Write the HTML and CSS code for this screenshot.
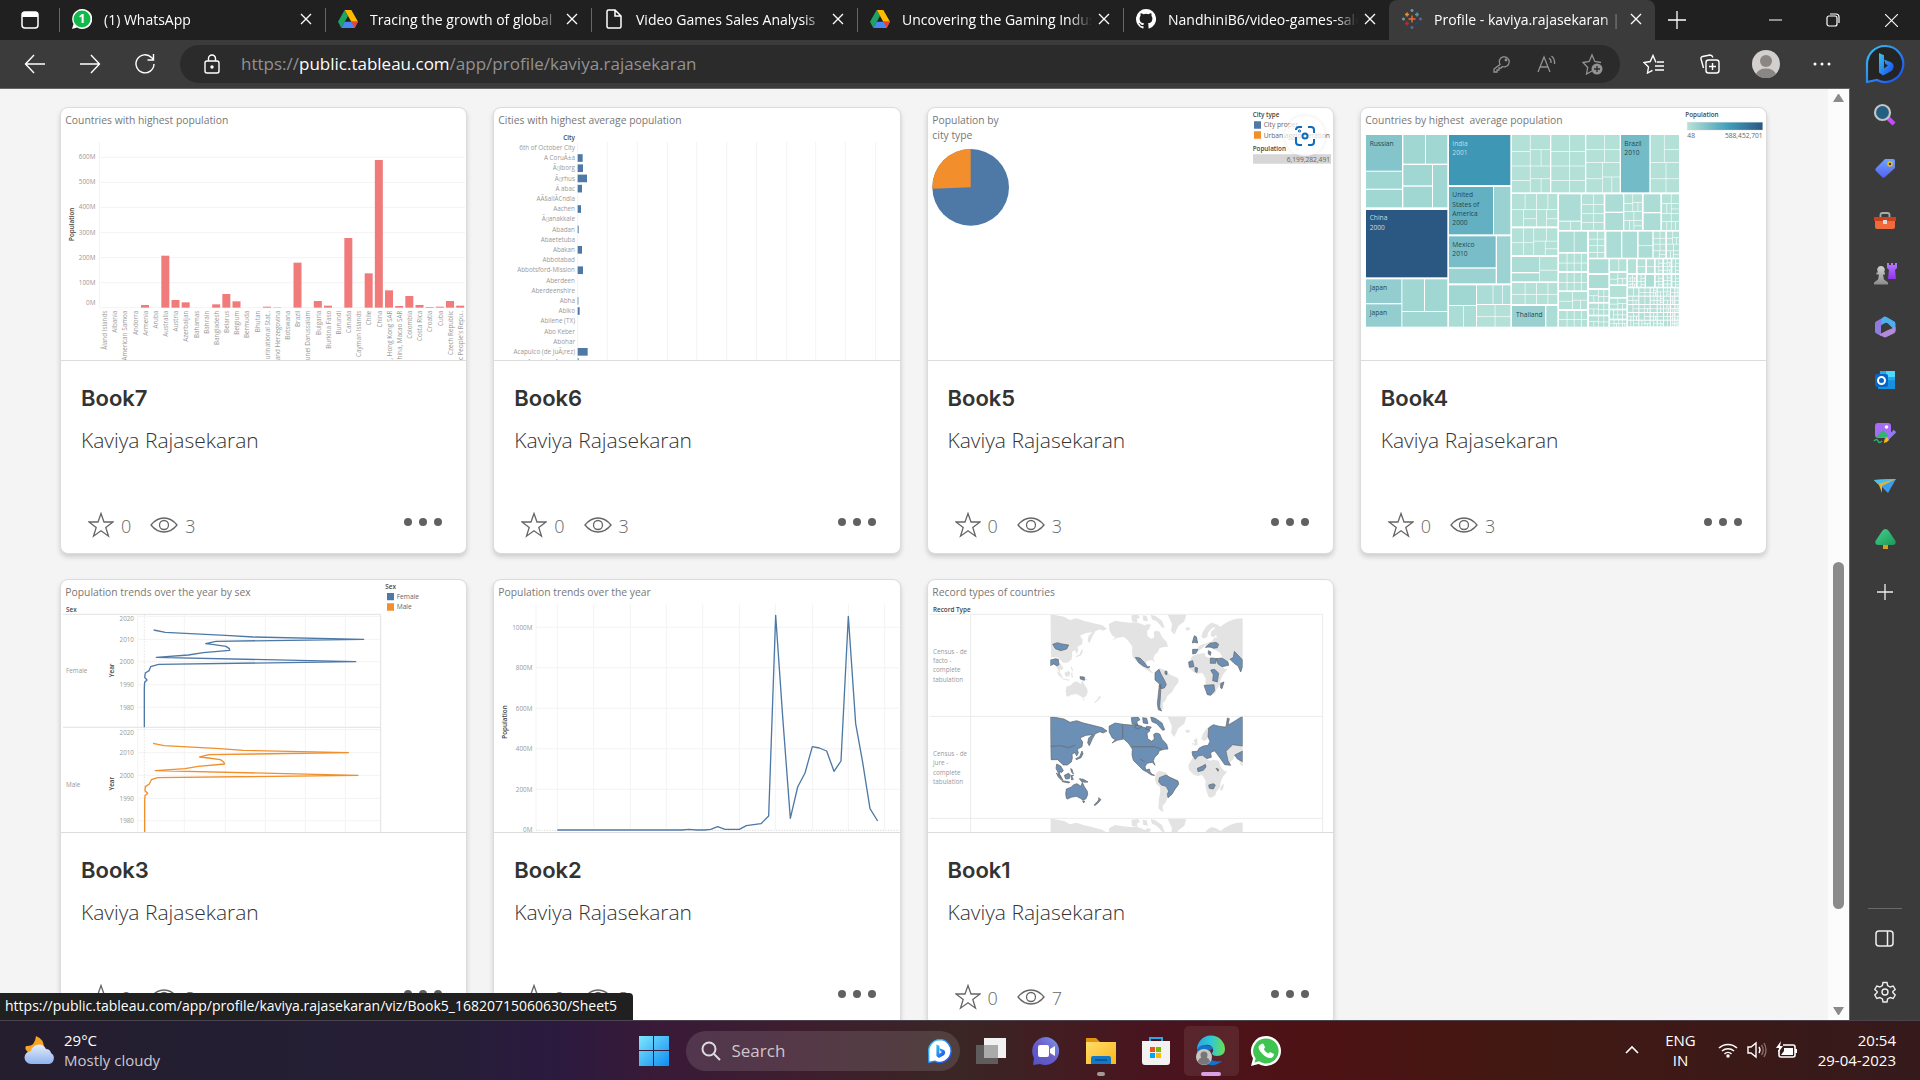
FILE: index.html
```html
<!DOCTYPE html>
<html lang="en">
<head>
<meta charset="utf-8">
<title>Profile - kaviya.rajasekaran | Tableau Public</title>
<link rel="stylesheet" href="styles.css">
</head>
<body>
<svg class="defs" aria-hidden="true">
  <defs>
    <linearGradient id="gBlue" x1="0" y1="0" x2="1" y2="1"><stop offset="0" stop-color="#37c6f0"/><stop offset="1" stop-color="#1b48ef"/></linearGradient>
    <linearGradient id="gPurple" x1="0" y1="0" x2="0" y2="1"><stop offset="0" stop-color="#b57bff"/><stop offset="1" stop-color="#9333f0"/></linearGradient>
    <linearGradient id="gGrey" x1="0" y1="0" x2="0" y2="1"><stop offset="0" stop-color="#d0d0d0"/><stop offset="1" stop-color="#8c8c8c"/></linearGradient>
    <linearGradient id="gTag" x1="0" y1="0" x2="0" y2="1"><stop offset="0" stop-color="#6fa4fb"/><stop offset="1" stop-color="#5660f4"/></linearGradient>
    <linearGradient id="gTree" x1="0" y1="0" x2="1" y2="1"><stop offset="0" stop-color="#49cf91"/><stop offset="1" stop-color="#189a55"/></linearGradient>
    <linearGradient id="gWin" x1="0" y1="0" x2="1" y2="1"><stop offset="0" stop-color="#7fe6ff"/><stop offset="1" stop-color="#0d8df0"/></linearGradient>
    <linearGradient id="gFolder" x1="0" y1="0" x2="1" y2="1"><stop offset="0" stop-color="#ffdc6b"/><stop offset="1" stop-color="#fbb61b"/></linearGradient>
    <linearGradient id="gChat" x1="1" y1="0" x2="0" y2="1"><stop offset="0" stop-color="#7a9cf2"/><stop offset=".5" stop-color="#6a5cc8"/><stop offset="1" stop-color="#5154c8"/></linearGradient>
    <linearGradient id="gEdge" x1="0" y1="0" x2="1" y2="0"><stop offset="0" stop-color="#2aa5e0"/><stop offset=".5" stop-color="#2fc7d8"/><stop offset="1" stop-color="#6ae04f"/></linearGradient>
    <linearGradient id="gCloud" x1="0" y1="0" x2="0" y2="1"><stop offset="0" stop-color="#e4edfb"/><stop offset="1" stop-color="#8fb2ee"/></linearGradient>
    <linearGradient id="gScale" x1="0" y1="0" x2="1" y2="0"><stop offset="0" stop-color="#b7e3d7"/><stop offset=".55" stop-color="#3f9dba"/><stop offset="1" stop-color="#2b5783"/></linearGradient>
    <symbol id="drive" viewBox="0 0 18 16"><path fill="#1ea362" d="M6 0 0 10.500 3 16 9 5.300Z"/><path fill="#ffba00" d="M6 0h6l6 10.500h-6Z"/><path fill="#4688f4" d="M3 16 6 10.500h12L15 16Z"/><path fill="#ea4335" d="M12 10.500h6l-3 5.500Z"/></symbol>
    <symbol id="close" viewBox="0 0 12 12"><path d="M1 1l10 10M11 1 1 11" stroke="currentColor" stroke-width="1.300" fill="none"/></symbol>
    <symbol id="bing" viewBox="0 0 40 40"><path d="M20 2a18 18 0 1 1-8 34L2 38V20A18 18 0 0 1 20 2Z" fill="#242424" stroke="url(#gBlue)" stroke-width="2.200"/><path d="M14 9l5 2.200v13.300l4-3-2.500-1.500-1.500-4.500 6.500 2.500c4 1.700 4 6.500 1 9L18 31.500l-4-3Z" fill="url(#gBlue)"/></symbol>
    <symbol id="star" viewBox="0 0 26 26"><path d="M13 1.500l3 8.500h9l-7.200 5.400 2.700 8.800L13 18.800l-7.500 5.400 2.700-8.800L1 10h9Z" fill="none" stroke="#666" stroke-width="1.300"/></symbol>
    <symbol id="eye" viewBox="0 0 28 16"><path d="M1 8C5 3 9.500 1 14 1s9 2 13 7c-4 5-8.500 7-13 7S5 13 1 8Z" fill="none" stroke="#666" stroke-width="1.300"/><circle cx="14" cy="8" r="4.500" fill="none" stroke="#666" stroke-width="1.300"/></symbol>
    <symbol id="more" viewBox="0 0 40 8"><g fill="#616161"><circle cx="5" cy="4" r="4"/><circle cx="20" cy="4" r="4"/><circle cx="35" cy="4" r="4"/></g></symbol>
    <g id="asia"><path d="M421 134h9l32 6 18 10 20-5 20 7 25 6 32 8 14 10-12 6-9-4-14 6-8 14-10 22-5-8 3-15 12-10-20 2-18 8 8 12-2 14-14 8 3 10-5 10-5-10-9 4 1 12-3 12-12 9h-12l-9-8-8-8h-20Z"/></g>
    <g id="seasia"><path d="M440 275l12 6 8 14-6 6-4-5-1 10 6 10-5-2-6-14-6-12Z"/><path d="M439 302l8 6 12 14-4 2-10-10ZM457 325l22 4-2 3-20-4ZM463 309l12-6 6 4-3 12-11 1ZM483 310l8-2-5 5 4 8-5 2ZM482 289l4 2 4 14-5-5ZM508 319l12 2 14 8-7 1-12-2Z"/><path d="M516 236l3 8-6 12-14 6-2-3 12-6Z"/></g>
    <g id="australia"><path d="M469 350l14-5 8-8 10-3 6 4 6 4 4-12 6 13 9 14 1 10-5 12-9 5-8-6-12-6-16 3-10 5-4-2-2-14ZM518 386h6l-3 6Z"/></g>
    <g id="nz"><path d="M566 376l7 6-8 9-11 9-1-3 10-10 3-5Z"/></g>
    <g id="namerica"><path d="M598 180l-1-18 18-10 24 4 22 2 14-1 20 6 20 6 5 6-9 8 2 16 12 8 8-7-2-14 8-4 10 3 7 16 14 15 4 14-12 1-14 4-4 10-10 10-4 10 5 14-8-9-16 3-6 10 3 10 10-3 2 8 6 8 8 3-10-1-12-8-14-8-14-14-14-14-4-16 1-18-12-18-14-12-20 4-15 8 10-10-9-5Z"/><path d="M664 136l20-2 6 8-10 6 4 10-18-4ZM698 136l12 2 4 16-14-2ZM722 134l14 4 20 14 8 20-6 2-18-20-14-6ZM678 158l18 4-10 8-12-4ZM710 162l14 2-6 8-12-2Z"/></g>
    <g id="greenland"><path d="M773 134h56l-6 20-18 14-12 26-10-12 3-20Z"/><path d="M826 173l12-1 2 7-10 3Z"/></g>
    <g id="samerica"><path d="M738 303l10-8 20 6 10 12 26 11 2 12-12 16-8 14-14 12-6 14-8 8 1 14 4 4-10-2-8-8 2-28 4-22-1-14-10-8-6-16Z"/></g>
    <g id="africa"><path d="M848 257l16-5 20-3 2 10 14 6 8-3 18 3 6 18 12 14h8l-14 18-6 14-2 16-10 12-4 12-12 7-8-2-6-16-4-18 1-14-6-12-6-6-12 3-12-4-14-14-2-14 8-14ZM934 340l8-6-3 16-5 6-4-6Z"/></g>
    <g id="europe"><path d="M848 250l-2-12 16-1 4-8 12-6 10-2 8-4 10-4 6-10 10-1-4-6-8 6-8-4 2-14 8-6 4-8-12 6-10 12-2 12-10 6-8-6 4-14 12-18 14-10 14 4 14 8 10-8 18-10 18-6 30-2v118l-8 22-8-6-6-20-12-8-4 10-12 12-14 4-14-28-10-6-10-4-2-8-10 4-6-6-8-2-6 8-12 8ZM853 202l8-6 2 22-12 2 4-10-4-2ZM846 211l6 2-4 6Z"/></g>
    <g id="world"><use href="#asia"/><use href="#seasia"/><use href="#australia"/><use href="#nz"/><use href="#namerica"/><use href="#greenland"/><use href="#samerica"/><use href="#africa"/><use href="#europe"/></g>
    <clipPath id="mapClip"><path d="M421 133h577v305H421Z"/></clipPath>
  </defs>
</svg>

<header class="tabs">
  <button class="tab-actions" aria-label="Tab actions"><svg width="20" height="20" viewBox="0 0 20 20"><rect x="2" y="2" width="16" height="16" rx="3" fill="none" stroke="#fff" stroke-width="1.500"/><path d="M2 5a3 3 0 0 1 3-3h10a3 3 0 0 1 3 3v2H2Z" fill="#fff"/></svg></button>
  <div class="tab"><svg width="20" height="20" viewBox="0 0 20 20"><path d="M10 0a10 10 0 1 1-5 18.500L0 20l1.500-5A10 10 0 0 1 10 0Z" fill="#fff"/><circle cx="10" cy="10" r="8.500" fill="#12b84a"/><text x="10" y="14" class="badge-text">1</text></svg><span class="tab-title">(1) WhatsApp</span><button class="tab-close" aria-label="Close tab"><svg width="12" height="12"><use href="#close"/></svg></button></div>
  <div class="tab"><svg width="20" height="18"><use href="#drive"/></svg><span class="tab-title">Tracing the growth of global</span><button class="tab-close" aria-label="Close tab"><svg width="12" height="12"><use href="#close"/></svg></button></div>
  <div class="tab"><svg width="20" height="20" viewBox="0 0 20 20"><path d="M3 2.500Q3 1 4.500 1H11l6 6v10.500q0 1.500-1.500 1.500h-11Q3 19 3 17.500ZM11 1v6h6" fill="none" stroke="#fff" stroke-width="1.500"/></svg><span class="tab-title">Video Games Sales Analysis</span><button class="tab-close" aria-label="Close tab"><svg width="12" height="12"><use href="#close"/></svg></button></div>
  <div class="tab"><svg width="20" height="18"><use href="#drive"/></svg><span class="tab-title">Uncovering the Gaming Industry</span><button class="tab-close" aria-label="Close tab"><svg width="12" height="12"><use href="#close"/></svg></button></div>
  <div class="tab"><svg width="20" height="20" viewBox="0 0 16 16"><path fill="#fff" d="M8 0a8 8 0 0 0-2.530 15.590c.4.070.55-.170.55-.380v-1.490c-2.230.480-2.700-.940-2.700-.940-.360-.920-.890-1.170-.890-1.170-.730-.5.050-.490.050-.490.810.060 1.230.830 1.230.830.710 1.220 1.870.870 2.330.660.070-.520.280-.870.500-1.070-1.780-.200-3.640-.890-3.640-3.950 0-.870.310-1.590.820-2.150-.080-.200-.360-1.020.080-2.120 0 0 .670-.210 2.200.820a7.600 7.600 0 0 1 4 0c1.530-1.040 2.200-.820 2.200-.820.440 1.100.160 1.920.080 2.120.510.560.820 1.270.820 2.150 0 3.070-1.870 3.750-3.650 3.950.290.250.540.730.540 1.480v2.200c0 .210.150.460.550.380A8 8 0 0 0 8 0Z"/></svg><span class="tab-title">NandhiniB6/video-games-sales</span><button class="tab-close" aria-label="Close tab"><svg width="12" height="12"><use href="#close"/></svg></button></div>
  <div class="tab active"><svg width="20" height="20" viewBox="0 0 20 20" fill="none" stroke-width="1.500"><path d="M10 6.500v7M6.500 10h7" stroke="#eb6c32"/><path d="M5 3.500v4M3 5.500h4" stroke="#e8912d"/><path d="M15 3.500v4M13 5.500h4" stroke="#5b93a5"/><path d="M5 12.500v4M3 14.500h4" stroke="#c72037"/><path d="M15 12.500v4M13 14.500h4" stroke="#1f447e"/><path d="M10 0v3M8.500 1.500h3M0 10h3M1.500 8.500v3" stroke="#7199a6"/><path d="M17 10h3M18.500 8.500v3M10 17v3M8.500 18.500h3" stroke="#5c6692"/></svg><span class="tab-title">Profile - kaviya.rajasekaran | Tableau</span><button class="tab-close" aria-label="Close tab"><svg width="12" height="12"><use href="#close"/></svg></button></div>
  <button class="new-tab" aria-label="New tab"><svg width="18" height="18" viewBox="0 0 18 18"><path d="M9 0v18M0 9h18" stroke="#fff" stroke-width="1.300"/></svg></button>
  <div class="window-buttons">
    <button aria-label="Minimize"><svg width="13" height="12" viewBox="0 0 13 12"><path d="M0 6h13" stroke="#fff"/></svg></button>
    <button aria-label="Restore"><svg width="14" height="14" viewBox="0 0 14 14" fill="none" stroke="#fff" stroke-width="1.200"><rect x="1" y="3" width="10" height="10" rx="2"/><path d="M4 1h6a3 3 0 0 1 3 3v6"/></svg></button>
    <button aria-label="Close window"><svg width="13" height="13" viewBox="0 0 12 12"><path d="M0 0l12 12M12 0 0 12" stroke="#fff"/></svg></button>
  </div>
</header>

<div class="browser">
  <div class="window">
    <nav class="toolbar">
      <button class="tool" aria-label="Back"><svg width="22" height="20" viewBox="0 0 22 20" fill="none" stroke="#fff" stroke-width="1.400"><path d="M21 10H2M10 1 1.500 10 10 19"/></svg></button>
      <button class="tool" aria-label="Forward"><svg width="22" height="20" viewBox="0 0 22 20" fill="none" stroke="#fff" stroke-width="1.400"><path d="M1 10h19M12 1l8.500 9L12 19"/></svg></button>
      <button class="tool" aria-label="Refresh"><svg width="22" height="22" viewBox="0 0 22 22" fill="none" stroke="#fff" stroke-width="1.400"><path d="M20 11A9 9 0 1 1 17.500 4.600L19.500 6.500M19.500 1v6h-6"/></svg></button>
      <div class="address">
        <button class="lock" aria-label="Site information"><svg width="18" height="20" viewBox="0 0 18 20" fill="none" stroke="#fff" stroke-width="1.400"><rect x="2" y="7" width="14" height="12" rx="2"/><path d="M5.500 7V4.500a3.500 3.500 0 0 1 7 0V7"/><circle cx="9" cy="13" r="1" fill="#fff"/></svg></button>
        <div class="url" role="textbox" contenteditable="true" spellcheck="false" aria-label="Address">https://<b>public.tableau.com</b>/app/profile/kaviya.rajasekaran</div>
        <button class="hint" aria-label="Passwords"><svg width="18" height="18" viewBox="0 0 18 18" fill="none" stroke="#929292" stroke-width="1.300"><path d="M7 9.500A5 5 0 1 1 9.500 11.500L8 13H6v2H4v2H1v-3Z"/><circle cx="13" cy="5" r=".8"/></svg></button>
        <button class="hint" aria-label="Read aloud"><svg width="20" height="18" viewBox="0 0 20 18" fill="none" stroke="#929292" stroke-width="1.300"><path d="M1 17 7 2l6 15M3.500 12h7M12 3a5 5 0 0 1 2 5M14.500 1a9 9 0 0 1 3 8"/></svg></button>
        <button class="hint" aria-label="Add to favorites"><svg width="22" height="22" viewBox="0 0 22 22" fill="none" stroke="#929292" stroke-width="1.300"><path d="M11 18l-5.500 3 1.200-6.500L2 9.500 8.200 8.500 11 2l2.800 6.500L20 9.500"/><circle cx="16" cy="16" r="5.500" fill="#929292" stroke="none"/><path d="M16 13v6M13 16h6" stroke="#2b2b2b"/></svg></button>
      </div>
      <button class="tool wide" aria-label="Favorites"><svg width="22" height="20" viewBox="0 0 22 20" fill="none" stroke="#fff" stroke-width="1.400"><path d="M13 8.500 10 1.500 7.200 7.500 1 8.500l4.500 4.500-1 6 5-2.700M14 8h7M12 12h9M12 16h9"/></svg></button>
      <button class="tool wide" aria-label="Collections"><svg width="20" height="20" viewBox="0 0 20 20" fill="none" stroke="#fff" stroke-width="1.400"><rect x="6" y="6" width="13" height="13" rx="2.500"/><path d="M12.500 9v7M9 12.500h7M3.500 14 1 5a2 2 0 0 1 1.500-2.500L10 1q2 0 3 2.500"/></svg></button>
      <button class="tool wide" aria-label="Profile"><svg width="28" height="28" viewBox="0 0 28 28"><circle cx="14" cy="14" r="14" fill="#d2cfcc"/><circle cx="14" cy="11" r="6" fill="#8a8683"/><path d="M4 24a10.500 8 0 0 1 20 0 14 14 0 0 1-20 0Z" fill="#8a8683"/></svg></button>
      <button class="tool wide" aria-label="Settings and more"><svg width="18" height="4" viewBox="0 0 18 4" fill="#fff"><circle cx="2" cy="2" r="1.500"/><circle cx="9" cy="2" r="1.500"/><circle cx="16" cy="2" r="1.500"/></svg></button>
    </nav>

    <div class="viewport">
      <main class="cards">
        <article class="card">
          <a class="thumb" href="#book7"><svg viewBox="63 39 1218 756" preserveAspectRatio="xMinYMin slice">
            <text class="ct" x="76" y="88">Countries with highest population</text>
            <path class="gl" d="M178 140V638M178 187H1275M178 262H1275M178 337H1275M178 413H1275M178 488H1275M178 563H1275M178 638H1275"/>
            <g class="ax end"><text x="166" y="193">600M</text><text x="166" y="268">500M</text><text x="166" y="343">400M</text><text x="166" y="419">300M</text><text x="166" y="495">200M</text><text x="166" y="569">100M</text><text x="166" y="631">0M</text></g>
            <text class="axt mid" transform="translate(102 388) rotate(-90)">Population</text>
            <g id="countryBars"></g>
          </svg></a>
          <div class="info"><h2>Book7</h2><p>Kaviya Rajasekaran</p><div class="stats"><button aria-label="Favorite"><svg width="26" height="26"><use href="#star"/></svg></button><span>0</span><svg class="views" width="28" height="16"><use href="#eye"/></svg><span>3</span><button class="dots" aria-label="More"><svg width="40" height="8"><use href="#more"/></svg></button></div></div>
        </article>

        <article class="card">
          <a class="thumb" href="#book6"><svg viewBox="42 39 1218 756" preserveAspectRatio="xMinYMin slice">
            <text class="ct" x="55" y="88">Cities with highest average population</text>
            <path class="gl" d="M293 140V795M382 140V795M472 140V795M562 140V795M650 140V795M740 140V795M830 140V795M920 140V795M1007 140V795M1096 140V795M1187 140V795"/>
            <text class="axt end" x="285" y="135">City</text>
            <g id="cityBars"></g>
          </svg></a>
          <div class="info"><h2>Book6</h2><p>Kaviya Rajasekaran</p><div class="stats"><button aria-label="Favorite"><svg width="26" height="26"><use href="#star"/></svg></button><span>0</span><svg class="views" width="28" height="16"><use href="#eye"/></svg><span>3</span><button class="dots" aria-label="More"><svg width="40" height="8"><use href="#more"/></svg></button></div></div>
        </article>

        <article class="card">
          <a class="thumb" href="#book5"><svg viewBox="54 39 1218 756" preserveAspectRatio="xMinYMin slice">
            <text class="ct" x="67" y="88">Population by</text><text class="ct" x="67" y="131">city type</text>
            <circle cx="182" cy="277" r="115" fill="#4e79a7"/><path d="M182 277V162A115 115 0 0 0 67 281Z" fill="#f28e2b"/>
            <text class="axt" x="1028" y="67">City type</text>
            <path fill="#4e79a7" d="M1032 79h21v22h-21Z"/><path fill="#f28e2b" d="M1032 109h21v22h-21Z"/>
            <g class="lg"><text x="1061" y="97">City proper</text><text x="1061" y="128">Urban agglomeration</text></g>
            <text class="axt" x="1028" y="169">Population</text>
            <path fill="#d6d6d6" d="M1029 178h234v28h-234Z"/><text class="lg end" x="1260" y="200">6,199,282,491</text>
          </svg></a>
          <button class="lens" aria-label="Visual search"><svg width="22" height="22" viewBox="0 0 22 22" fill="none" stroke="#0f6cbd" stroke-width="2"><path d="M8 2H5a3 3 0 0 0-3 3M14 2h3a3 3 0 0 1 3 3v3M20 14v3a3 3 0 0 1-3 3h-3M8 20H5a3 3 0 0 1-3-3v-5"/><circle cx="11" cy="11" r="2.500"/><circle cx="5.500" cy="6" r=".5"/></svg></button>
          <div class="info"><h2>Book5</h2><p>Kaviya Rajasekaran</p><div class="stats"><button aria-label="Favorite"><svg width="26" height="26"><use href="#star"/></svg></button><span>0</span><svg class="views" width="28" height="16"><use href="#eye"/></svg><span>3</span><button class="dots" aria-label="More"><svg width="40" height="8"><use href="#more"/></svg></button></div></div>
        </article>

        <article class="card">
          <a class="thumb" href="#book4"><svg viewBox="33 39 1218 756" preserveAspectRatio="xMinYMin slice">
            <text class="ct" x="46" y="88">Countries by highest&#160; average population</text>
            <g id="treemap"></g>
            <g class="tm"><text x="59" y="152">Russian</text><text x="59" y="584">Japan</text><text x="59" y="659">Japan</text><text x="307" y="307">United</text><text x="307" y="335">States of</text><text x="307" y="362">America</text><text x="307" y="389">2000</text><text x="307" y="455">Mexico</text><text x="307" y="483">2010</text><text x="823" y="152">Brazil</text><text x="823" y="180">2010</text><text x="498" y="666">Thailand</text></g>
            <g class="tm light"><text x="307" y="152">India</text><text x="307" y="180">2001</text><text x="59" y="376">China</text><text x="59" y="404">2000</text></g>
            <text class="axt" x="1006" y="67">Population</text>
            <path d="M1012 82h226v23h-226Z" fill="url(#gScale)" stroke="#ccc"/>
            <text class="lg" x="1012" y="129">48</text><text class="lg end" x="1238" y="129">588,452,701</text>
          </svg></a>
          <div class="info"><h2>Book4</h2><p>Kaviya Rajasekaran</p><div class="stats"><button aria-label="Favorite"><svg width="26" height="26"><use href="#star"/></svg></button><span>0</span><svg class="views" width="28" height="16"><use href="#eye"/></svg><span>3</span><button class="dots" aria-label="More"><svg width="40" height="8"><use href="#more"/></svg></button></div></div>
        </article>

        <article class="card">
          <a class="thumb" href="#book3"><svg viewBox="63 30 1218 756" preserveAspectRatio="xMinYMin slice">
            <text class="ct" x="76" y="79">Population trends over the year by sex</text>
            <text class="axt" x="78" y="126">Sex</text>
            <path class="gl" d="M293 133V786M433 133V786M556 133V786M676 133V786M796 133V786M916 133V786M293 139H1022M293 208H1022M293 275H1022M293 344H1022M293 412H1022M293 479H1022M293 548H1022M293 616H1022M293 685H1022M293 752H1022"/>
            <path d="M69 133H1022V786M69 472H1022" fill="none" stroke="#e2e2e2" stroke-width="3"/>
            <path d="M313 133V786" stroke="#ddd" stroke-width="2" stroke-dasharray="5 4"/>
            <g class="ax end"><text x="282" y="154">2020</text><text x="282" y="215">2010</text><text x="282" y="282">2000</text><text x="282" y="351">1990</text><text x="282" y="419">1980</text><text x="282" y="494">2020</text><text x="282" y="555">2010</text><text x="282" y="623">2000</text><text x="282" y="692">1990</text><text x="282" y="759">1980</text></g>
            <g class="ax"><text x="78" y="310">Female</text><text x="78" y="650">Male</text></g>
            <text class="axt mid" transform="translate(223 301) rotate(-90)">Year</text><text class="axt mid" transform="translate(223 641) rotate(-90)">Year</text>
            <path class="ln" d="M341 180L376 187 556 196 640 201 971 208 528 214 497 221 522 224 558 229 568 236 569 241 490 248 445 255 349 262 947 275 356 283 332 290 327 302 316 309 314 322 321 330 314 337 313 355V472"/>
            <path class="ln or" d="M339 520L372 527 540 536 610 541 925 548 507 554 479 561 505 564 541 569 551 576 554 582 475 589 435 596 346 602 954 616 353 623 334 629 328 642 316 650 315 662 323 670 315 677 314 696V786"/>
            <text class="axt" x="1036" y="57">Sex</text><path fill="#4e79a7" d="M1041 69h21v22h-21Z"/><path fill="#f28e2b" d="M1041 100h21v22h-21Z"/>
            <g class="lg"><text x="1070" y="88">Female</text><text x="1070" y="118">Male</text></g>
          </svg></a>
          <div class="info"><h2>Book3</h2><p>Kaviya Rajasekaran</p><div class="stats"><button aria-label="Favorite"><svg width="26" height="26"><use href="#star"/></svg></button><span>0</span><svg class="views" width="28" height="16"><use href="#eye"/></svg><span>3</span><button class="dots" aria-label="More"><svg width="40" height="8"><use href="#more"/></svg></button></div></div>
        </article>

        <article class="card">
          <a class="thumb" href="#book2"><svg viewBox="42 30 1218 756" preserveAspectRatio="xMinYMin slice">
            <text class="ct" x="55" y="79">Population trends over the year</text>
            <path class="gl" d="M168 102V780M232 102V780M341 102V780M451 102V780M559 102V780M668 102V780M778 102V780M886 102V780M998 102V780M1105 102V780M1214 102V780M168 172H1257M168 293H1257M168 415H1257M168 536H1257M168 658H1257"/>
            <path d="M168 781H1257" stroke="#ccc" stroke-width="2" stroke-dasharray="4 4"/>
            <g class="ax end"><text x="157" y="179">1000M</text><text x="157" y="300">800M</text><text x="157" y="422">600M</text><text x="157" y="543">400M</text><text x="157" y="665">200M</text><text x="157" y="787">0M</text></g>
            <text class="axt mid" transform="translate(81 456) rotate(-90)">Population</text>
            <path class="ln" d="M232 780H605L627 778 650 780H672L692 778 713 770 735 778H778L799 767 843 761 866 738 887 136 908 440 931 745 953 651 975 609 997 530 1018 534 1040 543 1062 604 1083 573 1105 139 1127 461 1148 577 1170 716 1193 753"/>
          </svg></a>
          <div class="info"><h2>Book2</h2><p>Kaviya Rajasekaran</p><div class="stats"><button aria-label="Favorite"><svg width="26" height="26"><use href="#star"/></svg></button><span>0</span><svg class="views" width="28" height="16"><use href="#eye"/></svg><span>3</span><button class="dots" aria-label="More"><svg width="40" height="8"><use href="#more"/></svg></button></div></div>
        </article>

        <article class="card">
          <a class="thumb" href="#book1"><svg viewBox="54 30 1218 756" preserveAspectRatio="xMinYMin slice">
            <text class="ct" x="67" y="79">Record types of countries</text>
            <text class="axt" x="69" y="126">Record Type</text>
            <path d="M60 133H1238V786M182 133V786M60 439H1238M60 745H1238" fill="none" stroke="#ebebeb" stroke-width="3"/>
            <g class="ax"><text x="69" y="252">Census - de</text><text x="69" y="280">facto -</text><text x="69" y="307">complete</text><text x="69" y="335">tabulation</text><text x="69" y="559">Census - de</text><text x="69" y="586">jure -</text><text x="69" y="614">complete</text><text x="69" y="641">tabulation</text></g>
            <g clip-path="url(#mapClip)"><use href="#world" fill="#e3e3e3"/>
              <path class="hl" d="M428 223l14-5 14 4 20 3-6 12-18 5-16-6ZM421 270l16-4 8 2 2 16-6 4-10-6-10 5ZM510 320l13 1v10l-12-4ZM676 262l14 2 14 14 8 12h8l-6 4-14-6-14-10ZM735 308l12-10 6 14 10 18 6 14-6 10-10 2-6-16-12-10ZM765 304h6v10l-6-2ZM748 345l5-2-2 40-2 28 6 12-10-4-3-18ZM853 197l6 4 4 18-10-2-6 2 3-12ZM848 238h16l-6 12-10 2ZM886 232l14-12 18-3 8 6-4 10-12 2-10-4ZM895 242l8 4-2 10-6-4ZM901 264l18 2-2 14h-16ZM918 266l18-2 18 12 2 10-20 4-12-8ZM960 268l10-6 3-18 8 8 17 18v20l-6 16-8-18-12-8ZM836 276l12-4 4 18-14 2ZM855 292l8 2-2 14-6-4ZM902 300l12-2 12 12-4 26-14-4 2-18ZM882 346l30-2 2 18-12 14-10-2ZM932 340l10-4-6 20-4-2Z"/></g>
            <g transform="translate(0 307)"><g clip-path="url(#mapClip)"><use href="#world" fill="#e3e3e3"/>
              <g class="hl"><use href="#asia"/><use href="#seasia"/><use href="#australia"/><use href="#nz"/><use href="#namerica"/>
              <path d="M748 316l20-8 10 6 26 12 2 10-12 16-8 14-12 10-2-10 4-10-8-14-14-4-8-10ZM848 250l-2-12 16-1 6-10 12-6 14-2 6-12-6-14 2-26 14-10 14 4 24 4 4-28 6 2-4 20 22-14 22-14v90l-30-4-20 20 6 28 8 14-18-2-14-20-16-22-12 6 2 14-14 4-12-10-14 2-8 10ZM974 248l24-12v32l-16-8ZM862 288l14-6 10-6 2 8-8 10-16 4ZM896 338l14-4 6 4-6 12-12-2ZM918 288l8 3-2 6Z"/><path d="M421 222l30-2 25 6 20-8M638 157v40M665 223h70l20 8M690 260l14 8" class="bd"/></g></g></g>
            <g transform="translate(0 613)"><g clip-path="url(#mapClip)"><use href="#world" fill="#e3e3e3"/></g></g>
          </svg></a>
          <div class="info"><h2>Book1</h2><p>Kaviya Rajasekaran</p><div class="stats"><button aria-label="Favorite"><svg width="26" height="26"><use href="#star"/></svg></button><span>0</span><svg class="views" width="28" height="16"><use href="#eye"/></svg><span>7</span><button class="dots" aria-label="More"><svg width="40" height="8"><use href="#more"/></svg></button></div></div>
        </article>
      </main>
      <div class="scrollbar" aria-hidden="true"><i class="arrow up"></i><div class="track"><i class="thumb-bar"></i></div><i class="arrow down"></i></div>
      <div class="status">https://public.tableau.com/app/profile/kaviya.rajasekaran/viz/Book5_16820715060630/Sheet5</div>
    </div>
  </div>

  <aside class="sidebar">
    <button class="bing" aria-label="Bing chat"><svg width="40" height="40"><use href="#bing"/></svg></button>
    <button aria-label="Search"><svg width="24" height="24" viewBox="0 0 24 24"><path d="M15 15l6 6" stroke="#c04df5" stroke-width="4.500"/><circle cx="9.500" cy="9.500" r="7.500" fill="#235f80" stroke="#c4c4c4" stroke-width="2.200"/></svg></button>
    <button aria-label="Shopping"><svg width="24" height="24" viewBox="0 0 24 24"><path d="M12 3h8q2 0 2 2v7L12 21q-1.500 1.500-3 0l-6-6q-1.500-1.500 0-3Z" fill="url(#gTag)"/><circle cx="17" cy="8" r="2" fill="#333" stroke="#f5c400" stroke-width="1.500"/></svg></button>
    <button aria-label="Tools"><svg width="24" height="24" viewBox="0 0 24 24"><path d="M7.500 8V6q0-2 2-2h5q2 0 2 2v2" fill="none" stroke="#aaa" stroke-width="1.800"/><path d="M1 8h22v4H1Z" fill="#c9421c"/><path d="M2 12h20v6q0 2-2 2H4q-2 0-2-2Z" fill="#ef6b3d"/><path d="M10 11h4v4h-4Z" fill="#ddd"/></svg></button>
    <button aria-label="Games"><svg width="24" height="24" viewBox="0 0 24 24"><path d="M14 1h2v2h2V1h2v2h2V1h2v5l-2 2 1 9h-8l1-9-2-2Z" fill="url(#gPurple)"/><path d="M8 4a4 4 0 0 1 3 6.500h1v2h-2l1 5 4 3v2H1v-2l4-3 1-5H3.500v-2H5A4 4 0 0 1 8 4Z" fill="url(#gGrey)"/></svg></button>
    <button aria-label="Microsoft 365"><svg width="24" height="24" viewBox="0 0 24 24"><path d="M12 1.500 3 6.500q-1 .6-1 2v8q0 1.200 1 1.800l5 2.700V11.500q0-1.500 1.200-2.200L14 6.500Z" fill="#8f7be0"/><path d="M10.500 2q1.500-.8 3 0L21 6.300q1.500.9 1.500 2.500V16L15 8.500q-2-1.500-4 0L8.500 10V4Z" fill="#4ab0f0"/><path d="M22.500 12v4q0 1.500-1.300 2.200L13.500 22q-1.500.8-3 0L6 19.500l9-4.500Z" fill="#b18ade"/></svg></button>
    <button aria-label="Outlook"><svg width="24" height="24" viewBox="0 0 24 24"><path d="M7 3h15v18H6Z" fill="#28a8ea"/><path d="M13 3h9v6h-9Z" fill="#50d9ff"/><path d="M5 13l17-1v9H5Z" fill="#1490df"/><rect x="2" y="6" width="13" height="13" rx="2" fill="#0a64c2"/><circle cx="8.500" cy="12.500" r="3.500" fill="none" stroke="#fff" stroke-width="2"/></svg></button>
    <button aria-label="Image creator"><svg width="24" height="24" viewBox="0 0 24 24"><rect x="2" y="2" width="16" height="15" rx="3" fill="#a96bf5"/><path d="M3 16l7-7 7 7Z" fill="#2fb56f"/><circle cx="13.500" cy="6" r="1.800" fill="#fff"/><path d="M22 10l-8 8" stroke="#8b7cf8" stroke-width="3.500"/><path d="M14 16l2 3q-2 3-5 3 0-5 3-6Z" fill="#f5b81c"/><path d="M1 20q3-3 4 0t4 0" stroke="#2fb56f" stroke-width="1.500" fill="none"/></svg></button>
    <button aria-label="Drop"><svg width="24" height="24" viewBox="0 0 24 24"><path d="M1 6l22-1-8 14-5-5Z" fill="#3b9cf0"/><path d="M1 6l22-1-14 7v7l-3-8Z" fill="#e9b22b"/><path d="M1 6l22-1L5 10Z" fill="#47c0f0"/></svg></button>
    <button aria-label="Browser essentials"><svg width="24" height="24" viewBox="0 0 24 24"><path d="M10 15h5v7h-5Z" fill="#e09a1c"/><path d="M12.500 2q2.500 0 4 3l6 9q1 4-3 4h-14q-4 0-3-4l6-9q1.500-3 4-3Z" fill="url(#gTree)"/></svg></button>
    <button aria-label="Customize"><svg width="16" height="16" viewBox="0 0 16 16"><path d="M8 0v16M0 8h16" stroke="#eee" stroke-width="1.300"/></svg></button>
    <hr>
    <button aria-label="Hide sidebar"><svg width="20" height="18" viewBox="0 0 20 18" fill="none" stroke="#eee" stroke-width="1.500"><rect x="1" y="1" width="17" height="15" rx="3"/><path d="M12.500 1v15"/></svg></button>
    <button aria-label="Settings"><svg width="22" height="22" viewBox="0 0 22 22" fill="none" stroke="#eee" stroke-width="1.400"><circle cx="11" cy="11" r="3"/><path d="M9 1.500h4l.6 3 2.600 1.500 3-1 2 3.500-2.400 2v1l2.400 2.500-2 3.500-3-1-2.600 1.500-.6 3H9l-.6-3L5.800 16.500l-3 1-2-3.500 2.400-2.500v-1L.8 8.500l2-3.500 3 1 2.600-1.500Z"/></svg></button>
  </aside>
</div>

<footer class="taskbar">
  <button class="weather"><svg width="32" height="32" viewBox="0 0 32 32"><path d="M12 2q10 4 7 13L4 18Q0 15 2 12q9 1 10-10Z" fill="#f5a524"/><path d="M7 30a6.500 6.500 0 0 1 0-13 8 8 0 0 1 15-2q4 0 5 4a6 6 0 0 1-2 11Z" fill="url(#gCloud)"/></svg><span><strong>29°C</strong><br>Mostly cloudy</span></button>
  <div class="apps">
    <button aria-label="Start"><svg width="30" height="30" viewBox="0 0 30 30"><path d="M0 0h14v14H0ZM15 0h15v14H15ZM0 15h14v15H0ZM15 15h15v15H15Z" fill="url(#gWin)"/></svg></button>
    <label class="search"><svg width="20" height="20" viewBox="0 0 20 20" fill="none" stroke="#ddd" stroke-width="2"><circle cx="8" cy="8" r="6.500"/><path d="M13 13l6 6"/></svg><input type="search" placeholder="Search" aria-label="Search"><svg width="24" height="24" viewBox="0 0 40 40"><path d="M20 1a19 19 0 1 1-9 36L1 39V20A19 19 0 0 1 20 1Z" fill="#fff" stroke="url(#gBlue)" stroke-width="2.500"/><path d="M14 9l5 2.200v13.300l4-3-2.500-1.500-1.500-4.500 6.500 2.500c4 1.700 4 6.500 1 9L18 31.500l-4-3Z" fill="url(#gBlue)"/></svg></label>
    <button aria-label="Task view"><svg width="30" height="28" viewBox="0 0 30 28"><path d="M8 1h22v20H8Z" fill="#f2f2f2"/><path d="M0 8h22v19H0Z" fill="#666" fill-opacity=".85"/><path d="M8 8h14v13H8Z" fill="#aaa"/></svg></button>
    <button aria-label="Chat"><svg width="30" height="30" viewBox="0 0 30 30"><path d="M15 1a14 14 0 1 1-6 27L2 29l1-7A14 14 0 0 1 15 1Z" fill="url(#gChat)"/><rect x="7" y="9" width="11" height="12" rx="2" fill="#fff"/><path d="M19 13l5-3v10l-5-3Z" fill="#fff"/></svg></button>
    <button class="running" aria-label="File Explorer"><svg width="32" height="28" viewBox="0 0 32 28"><path d="M1 1h10l4 4H1Z" fill="#e0940f"/><path d="M1 5h30v22H1Z" fill="url(#gFolder)"/><path d="M6 27v-6q0-2 2-2h16q2 0 2 2v6Z" fill="#1179c7"/><path d="M10 23h12" stroke="#0a4f88" stroke-width="1.500"/></svg></button>
    <button aria-label="Microsoft Store"><svg width="30" height="30" viewBox="0 0 30 30"><path d="M9 6V2h12v4" fill="none" stroke="#2aa7ea" stroke-width="2"/><path d="M1 5h28v21q0 3-3 3H4q-3 0-3-3Z" fill="#f2f2f2"/><path fill="#f25022" d="M9 11h5v5H9Z"/><path fill="#7fba00" d="M15 11h5v5h-5Z"/><path fill="#00a4ef" d="M9 17h5v5H9Z"/><path fill="#ffb900" d="M15 17h5v5h-5Z"/></svg></button>
    <button class="current" aria-label="Microsoft Edge"><svg width="32" height="32" viewBox="0 0 32 32"><path d="M2 15a14 14 0 0 1 28-1q0 7-8 7-5 0-5-3 2-2 1-4-2-5-8-4Q4 11 2 15Z" fill="url(#gEdge)"/><path d="M2 15q2-5 8-5 6 0 8 4-5 0-4 7 2 7 13 5-5 5-12 4Q2 28 2 15Z" fill="#1372c9"/><circle cx="9" cy="22" r="8" fill="#c9c6c3"/><circle cx="9" cy="20" r="3.500" fill="#777"/><path d="M3 27a6 5 0 0 1 12 0 8 8 0 0 1-12 0Z" fill="#777"/></svg></button>
    <button aria-label="WhatsApp"><svg width="32" height="32" viewBox="0 0 32 32"><path d="M16 1a15 15 0 1 1-7.500 28L1 31l2-7.500A15 15 0 0 1 16 1Z" fill="#fff"/><path d="M16 3.500a12.500 12.500 0 1 1-7 22.800L4.500 27.500l1.200-4A12.500 12.500 0 0 1 16 3.500Z" fill="#3fc351"/><path d="M11.500 9q1-1 2 0l1.500 3q0 1-1.200 2.200 1.700 3 4.700 4.300l1.500-1.600 4 2q0 3.600-4 4.100-3.500 0-7.500-4t-4-7q.5-2 3-3Z" fill="#fff"/></svg></button>
  </div>
  <div class="tray">
    <button aria-label="Show hidden icons"><svg width="14" height="9" viewBox="0 0 14 9"><path d="M1 8l6-6 6 6" fill="none" stroke="#fff" stroke-width="1.600"/></svg></button>
    <button class="lang">ENG<br>IN</button>
    <button class="quick" aria-label="Network, sound and battery"><svg width="20" height="16" viewBox="0 0 20 16" fill="none" stroke="#fff" stroke-width="1.500"><path d="M1 6a13 13 0 0 1 18 0M4 9a9 9 0 0 1 12 0M6.500 12a5 5 0 0 1 7 0"/><circle cx="10" cy="14" r="1" fill="#fff"/></svg><svg width="20" height="18" viewBox="0 0 20 18" fill="none" stroke="#fff" stroke-width="1.400"><path d="M1 6h3l5-4v14l-5-4H1ZM12 6q2 3 0 6"/><path d="M14.500 4q3.500 5 0 10M17 2q4 7 0 14" stroke="#8a6c68"/></svg><svg width="22" height="18" viewBox="0 0 22 18"><path d="M7 4h10q2 0 2 2v8q0 2-2 2H5q-2 0-2-2V9" fill="none" stroke="#fff" stroke-width="1.600"/><path d="M8 7h9v7H5l3-4ZM19 8h2v4h-2ZM5 0 0 7h3L2 12l5-7H4Z" fill="#fff"/></svg></button>
    <button class="clock">20:54<br>29-04-2023</button>
  </div>
</footer>
<script src="charts.js"></script>
</body>
</html>
```
FILE: styles.css
```css
* { box-sizing: border-box; }
body {
  margin: 0;
  height: 100vh;
  display: flex;
  flex-direction: column;
  overflow: hidden;
  background: #202020;
  color: #fff;
  font-family: "Open Sans", "Noto Sans", sans-serif;
  font-size: 14px;
}
button {
  padding: 0;
  border: 0;
  background: none;
  color: inherit;
  font: inherit;
  display: flex;
  align-items: center;
  justify-content: center;
}
svg { display: block; flex: none; }
.defs { position: absolute; width: 0; height: 0; }

/* tab strip */
.tabs { display: flex; height: 40px; flex: none; }
.tab-actions { width: 59px; }
.tab {
  flex: 0 1 266px;
  min-width: 0;
  display: flex;
  align-items: center;
  padding: 0 13px 2px 13px;
  background: linear-gradient(#666, #666) 0 8px / 1px 24px no-repeat;
}
.tab.active { background: #3b3b3b; border-radius: 8px 8px 0 0; }
.tab-title {
  flex: 1;
  min-width: 0;
  margin: 0 6px 0 12px;
  overflow: hidden;
  white-space: nowrap;
  -webkit-mask-image: linear-gradient(90deg, #000 88%, transparent);
  mask-image: linear-gradient(90deg, #000 88%, transparent);
}
.tab-close { width: 12px; height: 12px; }
.new-tab { width: 44px; }
.window-buttons { margin-left: auto; display: flex; }
.window-buttons button { width: 58px; }
.badge-text { font-size: 12px; font-weight: 700; text-anchor: middle; fill: #fff; }

/* browser frame */
.browser { flex: 1; min-height: 0; display: flex; background: #3b3b3b; }
.window { flex: 1; min-width: 0; display: flex; flex-direction: column; }
.toolbar { height: 48px; flex: none; display: flex; align-items: center; padding-left: 7px; }
.tool { width: 55px; height: 48px; }
.wide { width: 56px; }
.address {
  flex: 1;
  height: 38px;
  margin: 0 6px 0 8px;
  padding: 0 6px 0 16px;
  border-radius: 19px;
  background: #2b2b2b;
  display: flex;
  align-items: center;
}
.lock { width: 32px; }
.url { flex: 1; margin-left: 13px; padding-bottom: 2px; font-size: 17px; color: #929292; outline: 0; white-space: nowrap; }
.url b { font-weight: 400; color: #fff; }
.hint { width: 45px; }

.viewport {
  flex: 1;
  min-height: 0;
  position: relative;
  display: flex;
  border-top: 1px solid #666;
  border-right: 1px solid #666;
  background: #f4f4f4;
  overflow: hidden;
}
.scrollbar {
  width: 21px;
  padding: 5px;
  background: #fcfcfc;
  display: flex;
  flex-direction: column;
}
.arrow { border: 5px solid transparent; }
.up { border-top: 0; border-bottom: 8px solid #8b8b8b; }
.down { border-bottom: 0; border-top: 8px solid #8b8b8b; }
.track { flex: 1; display: grid; grid-template-rows: 461fr 348fr 98fr; }
.thumb-bar { grid-row: 2; border-radius: 6px; background: #8b8b8b; }
.status {
  position: absolute;
  left: 0;
  bottom: 0;
  height: 27px;
  padding: 0 16px 0 5px;
  border-radius: 0 4px 0 0;
  background: #202020;
  line-height: 26px;
}

/* visualisation cards */
.cards {
  flex: 1;
  min-width: 0;
  align-self: flex-start;
  display: grid;
  grid-template-columns: repeat(4, minmax(0, 1fr));
  gap: 25px 26px;
  padding: 18px 61px 18px 60px;
}
.card {
  position: relative;
  border: 1px solid #dcdcdc;
  border-radius: 8px;
  background: #fff;
  box-shadow: 0 3px 5px rgba(0, 0, 0, .16);
  overflow: hidden;
  color: #333;
}
.thumb { display: block; border-bottom: 1px solid #dcdcdc; }
.thumb svg { width: 100%; height: 252px; }
.info { padding: 23px 20px 14px; }
.info h2 { margin: 0; font: 600 22px/28px Inter, sans-serif; }
.info p { margin: 14px 0 57px; font-size: 21px; font-weight: 300; line-height: 28px; }
.stats { display: flex; align-items: center; height: 28px; padding: 0 3px 0 7px; font-size: 18px; font-weight: 300; color: #666; }
.stats span { margin: 2px 0 0 7px; }
.views { margin-left: 19px; }
.dots { margin-left: auto; padding-bottom: 6px; }
.lens {
  position: absolute;
  top: 8px;
  right: 8px;
  width: 40px;
  height: 40px;
  border-radius: 50%;
  background: rgba(255, 255, 255, .72);
  box-shadow: 0 0 4px rgba(0, 0, 0, .1);
}

/* chart drawing */
.thumb text { font-family: "Open Sans", sans-serif; }
.ct { font-size: 31px; fill: #777; }
.ax { font-size: 19px; fill: #999; }
.axt { font-size: 19px; font-weight: 600; fill: #444; }
.lg { font-size: 20px; fill: #666; }
.tm { font-size: 20px; fill: #27474d; }
.light { fill: #c5dbe6; }
.end { text-anchor: end; }
.mid { text-anchor: middle; }
.gl { fill: none; stroke: #f3f3f3; stroke-width: 3; }
.ln { fill: none; stroke: #4e79a7; stroke-width: 4; stroke-linejoin: round; }
.or { stroke: #f28e2b; }
.hl { fill: #6b8fb5; stroke: #666; stroke-width: 2; }
.bd { fill: none; }

/* sidebar */
.sidebar { width: 70px; display: flex; flex-direction: column; padding-bottom: 2px; }
.sidebar button { height: 53px; flex: none; }
.sidebar .bing { height: 48px; }
.sidebar hr { width: 34px; margin: auto auto 3px; border: 0; border-top: 1px solid #6a6a6a; }

/* taskbar */
.taskbar {
  height: 60px;
  flex: none;
  display: grid;
  grid-template-columns: 1fr auto 1fr;
  align-items: center;
  border-top: 1px solid #4b4350;
  background: linear-gradient(90deg, #241e2f 0, #251e36 23%, #2b1a3f 29%, #391a38 34%, #3e1e2e 42%, #3a2624 50%, #49141f 60%, #4e1214 68%, #421812 79%, #351a1c 100%);
  font-size: 15px;
  line-height: 20px;
}
.weather { justify-self: start; gap: 8px; padding: 0 0 2px 24px; text-align: left; color: #cbc8d0; }
.weather strong { font-weight: 400; color: #fff; }
.apps { display: flex; align-items: center; }
.apps button { width: 55px; height: 50px; position: relative; border-radius: 5px; }
.search {
  width: 274px;
  height: 40px;
  margin: 0 4px;
  padding: 0 8px 0 15px;
  border-radius: 20px;
  background: rgba(255, 255, 255, .12);
  display: flex;
  align-items: center;
  gap: 11px;
}
.search input { flex: 1; min-width: 0; padding: 0; border: 0; outline: 0; background: none; color: #fff; font: inherit; font-size: 17px; }
.search input::placeholder { color: #cfc5cb; opacity: 1; }
.running::after, .current::after {
  content: "";
  position: absolute;
  left: 50%;
  bottom: 0;
  width: 8px;
  height: 4px;
  margin-left: -4px;
  border-radius: 2px;
  background: #a39a9a;
}
.apps .current { background: rgba(255, 255, 255, .08); }
.current::after { width: 20px; margin-left: -10px; background: #dba0e6; }
.tray { justify-self: end; display: flex; align-items: center; padding: 0 24px 2px 0; }
.lang { margin-left: 26px; }
.quick { margin-left: 22px; gap: 9px; }
.clock { margin-left: 20px; text-align: right; }
```
FILE: charts.js
```js
const NS = "http://www.w3.org/2000/svg";

function add(parent, name, attrs, text) {
  const el = document.createElementNS(NS, name);
  for (const key in attrs) el.setAttribute(key, attrs[key]);
  if (text) el.textContent = text;
  parent.appendChild(el);
}

// Country name and bar height
const countries = [["Åland Islands", 0], ["Albania", 0], ["American Samoa", 0], ["Andorra", 0], ["Armenia", 8], ["Aruba", 0],
  ["Australia", 156], ["Austria", 23], ["Azerbaijan", 16], ["Bahamas", 0], ["Bahrain", 0], ["Bangladesh", 10], ["Belarus", 41],
  ["Belgium", 19], ["Bermuda", 0], ["Bhutan", 0], ["urinational Stat..", 3], ["and Herzegovina", 1], ["Botswana", 0], ["Brazil", 135],
  ["runei Darussalam", 0], ["Bulgaria", 20], ["Burkina Faso", 6], ["Burundi", 0], ["Canada", 209], ["Cayman Islands", 0],
  ["Chile", 103], ["China", 443], ["a, Hong Kong SAR", 52], ["China, Macao SAR", 5], ["Colombia", 35], ["Costa Rica", 8],
  ["Croatia", 2], ["Cuba", 3], ["Czech Republic", 20], ["ic People's Repu..", 6]];
const bars = document.getElementById("countryBars");
countries.forEach(([name, h], i) => {
  const x = 193 + i * 30.5;
  if (h) add(bars, "rect", { x: x - 12, y: 638 - h, width: 24, height: h, fill: "#f07b7a" });
  add(bars, "text", { class: "ax end", transform: `translate(${x + 8} 647) rotate(-90)` }, name);
});

// City name and bar length
const cities = [["6th of October City", 0], ["A CoruÃ±a", 15], ["Ã▯lborg", 16], ["Ã▯rhus", 28], ["Ä abac", 13],
  ["AÃ§ailÃ¢ndia", 0], ["Aachen", 10], ["Ã▯anakkale", 0], ["Abadan", 3], ["Abaetetuba", 0], ["Abakan", 13], ["Abbotabad", 0],
  ["Abbotsford-Mission", 16], ["Aberdeen", 0], ["Aberdeenshire", 0], ["Abha", 2], ["Abiko", 6], ["Abilene (TX)", 0],
  ["Abo Keber", 0], ["Abohar", 0], ["Acapulco (de JuÃ¡rez)", 30], ["Acarigua-Araure", 3]];
const cityBars = document.getElementById("cityBars");
cities.forEach(([name, w], i) => {
  const y = 158 + i * 30.6;
  if (w) add(cityBars, "rect", { x: 293, y: y - 11, width: w, height: 23, fill: "#4e79a7" });
  add(cityBars, "text", { class: "ax end", x: 285, y: y + 7 }, name);
});

// Treemap: edges x1, y1, x2, y2, colour, and the number of cells inside
const map = document.getElementById("treemap");
function cell(x, y, w, h, fill) {
  add(map, "rect", { x, y, width: Math.max(w, 1), height: Math.max(h, 1), fill });
}
function divide(x, y, w, h, fill, n) {
  if (n < 2) return cell(x, y, w - 2, h - 2, fill);
  const first = Math.floor(n / 2), part = n % 2 ? .48 : .54;
  if (w > h * .9) {
    divide(x, y, w * part, h, fill, first);
    divide(x + w * part, y, w * (1 - part), h, fill, n - first);
  } else {
    divide(x, y, w, h * part, fill, first);
    divide(x, y + h * part, w, h * (1 - part), fill, n - first);
  }
}
const pale = "#b3e0d7", soft = "#abdcd5", mid = "#a0d7d3";
const blocks = [
  [48, 120, 158, 229, "#84c5cc"], [48, 230, 158, 283, mid], [48, 285, 158, 339, mid], [160, 120, 227, 208, mid], [228, 120, 294, 208, mid],
  [160, 210, 248, 273, mid], [160, 275, 248, 339, mid], [249, 210, 294, 339, mid], [48, 345, 294, 549, "#2b5783"],
  [48, 553, 156, 626, "#93cdd0"], [48, 628, 156, 697, "#93cdd0"], [157, 553, 224, 650, mid], [225, 553, 294, 650, mid], [157, 651, 294, 697, mid],
  [297, 120, 483, 272, "#3e97b5"], [297, 276, 431, 420, "#63b0c3"], [432, 276, 483, 420, "#9ad2d1"],
  [297, 424, 439, 519, "#79bdc9"], [297, 521, 439, 567, "#9cd3d2"], [441, 424, 483, 567, "#9cd3d2"],
  [297, 571, 380, 632, mid], [297, 633, 380, 697, soft, 2], [381, 571, 483, 629, soft, 3], [381, 630, 483, 697, pale, 4],
  [486, 120, 602, 294, pale, 10], [604, 120, 707, 294, pale, 8], [709, 120, 811, 294, pale, 9], [813, 120, 900, 294, "#74bbc8"], [902, 120, 989, 294, pale, 7],
  [486, 297, 624, 396, pale, 10], [486, 400, 624, 482, pale, 9], [486, 486, 570, 533, soft], [486, 535, 570, 561, soft], [570, 486, 624, 561, pale, 2],
  [486, 564, 624, 629, pale, 8], [486, 633, 587, 697, "#9ad1d0"], [589, 633, 624, 697, soft],
  [627, 298, 694, 379, soft], [627, 380, 694, 407, pale, 2], [696, 298, 763, 407, pale, 8], [766, 298, 821, 352, soft], [766, 354, 821, 407, soft],
  [823, 298, 878, 407, pale, 11], [881, 298, 933, 353, soft], [881, 355, 933, 407, soft], [936, 298, 989, 407, pale, 12],
  [627, 410, 713, 473, soft, 2], [717, 410, 765, 490, pale, 8], [769, 410, 815, 490, soft], [817, 410, 863, 490, soft], [866, 410, 909, 490, soft, 2],
  [911, 410, 948, 490, pale, 9], [951, 410, 989, 490, pale, 11],
  [627, 476, 713, 530, pale, 8], [627, 534, 713, 588, pale, 8], [627, 591, 713, 644, pale, 5], [627, 648, 713, 697, pale, 8],
  [717, 493, 777, 536, soft], [717, 540, 777, 581, soft], [717, 585, 777, 623, pale, 7], [717, 626, 777, 661, pale, 7], [717, 664, 777, 697, pale, 7],
  [780, 493, 831, 530, pale, 2], [780, 534, 831, 570, pale, 5], [780, 573, 831, 608, pale], [780, 611, 831, 643, pale, 5], [780, 646, 831, 673, pale, 7], [780, 676, 831, 697, pale, 10],
  [834, 493, 860, 536, pale], [863, 493, 888, 536, pale, 2], [891, 493, 914, 536, pale, 2], [917, 493, 939, 536, pale, 6], [942, 493, 964, 536, pale, 10], [967, 493, 989, 536, pale, 6],
  [834, 540, 860, 577, pale, 12], [863, 540, 886, 577, pale, 6], [888, 540, 914, 577, soft], [917, 540, 939, 577, pale, 6], [942, 540, 964, 577, pale, 7], [967, 540, 989, 577, pale, 6]
];
const columns = [834, 868, 902, 923, 942, 963, 976, 989], rows = [580, 605, 630, 654, 677, 697];
for (let r = 0; r < 5; r++) {
  for (let c = 0; c < 7; c++) blocks.push([columns[c], rows[r], columns[c + 1] - 1, rows[r + 1] - 1, pale, 2 + (r * 3 + c * 2) % 5]);
}
blocks.forEach(([x1, y1, x2, y2, fill, n]) => divide(x1, y1, x2 - x1, y2 - y1, fill, n || 1));
```
